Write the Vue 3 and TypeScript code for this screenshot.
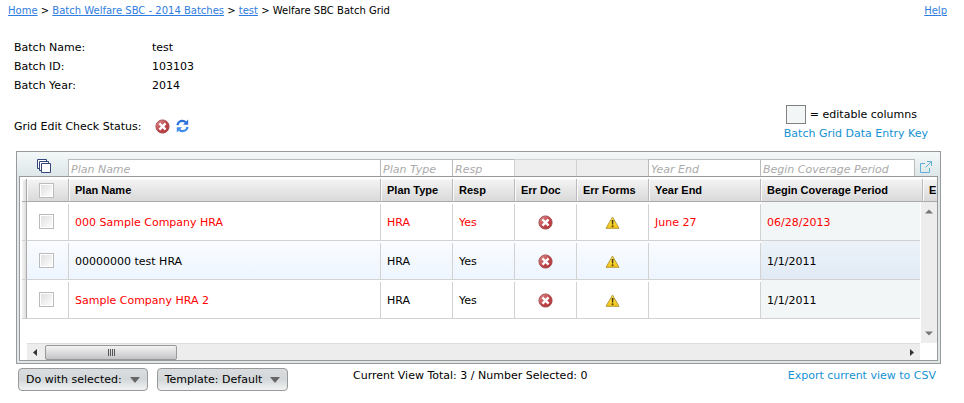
<script setup lang="ts">
interface Row { name: string; resp: string; yearEnd: string; begin: string; error: boolean; nameError: boolean }

const rows: Row[] = [
  { name: '000 Sample Company HRA', resp: 'Yes', yearEnd: 'June 27', begin: '06/28/2013', error: true, nameError: true },
  { name: '00000000 test HRA', resp: 'Yes', yearEnd: '', begin: '1/1/2011', error: false, nameError: false },
  { name: 'Sample Company HRA 2', resp: 'Yes', yearEnd: '', begin: '1/1/2011', error: false, nameError: true },
]
const details: [string, string][] = [
  ['Batch Name:', 'test'],
  ['Batch ID:', '103103'],
  ['Batch Year:', '2014'],
]
</script>

<template>
  <div class="page">
    <svg class="defs" aria-hidden="true">
      <defs>
        <linearGradient id="red" x1="0" y1="0" x2="1" y2="1">
          <stop offset="0" stop-color="#e0999a" /><stop offset=".5" stop-color="#c2494c" /><stop offset="1" stop-color="#ad3033" />
        </linearGradient>
        <linearGradient id="yellow" x1="0" y1="0" x2="0" y2="1">
          <stop offset="0" stop-color="#ffe96a" /><stop offset="1" stop-color="#f6c40c" />
        </linearGradient>
        <symbol id="err" viewBox="0 0 15 15">
          <circle cx="7.5" cy="7.5" r="6.6" fill="url(#red)" stroke="#a04a4c" stroke-width=".9" />
          <path d="M5.3 5.3l4.4 4.4M9.7 5.3l-4.4 4.4" stroke="#fff" stroke-width="2.4" stroke-linecap="square" />
        </symbol>
        <symbol id="warn" viewBox="0 0 15 13">
          <path d="M7.5 1L14 12.3H1z" fill="url(#yellow)" stroke="#b39a3c" stroke-linejoin="round" />
          <path d="M6.7 4h1.8l-.3 4.6H7z" fill="#4b3d0a" />
          <rect x="6.7" y="9.4" width="1.7" height="1.7" fill="#4b3d0a" />
        </symbol>
      </defs>
    </svg>

    <header class="top">
      <nav aria-label="Breadcrumb">
        <a href="#">Home</a> &gt; <a href="#">Batch Welfare SBC - 2014 Batches</a> &gt; <a href="#">test</a> &gt; Welfare SBC Batch Grid
      </nav>
      <a href="#">Help</a>
    </header>

    <section class="info">
      <div>
        <dl class="details">
          <template v-for="[label, value] in details" :key="label">
            <dt>{{ label }}</dt>
            <dd>{{ value }}</dd>
          </template>
        </dl>
        <div class="status">
          <span class="status-label">Grid Edit Check Status:</span>
          <svg width="15" height="15"><use href="#err" /></svg>
          <button class="plain" type="button" aria-label="Refresh">
            <svg width="13" height="14" viewBox="0 0 13 14" fill="none">
              <path d="M1.6 6.2C1.8 3.6 4 1.9 6.4 1.9c1.3 0 2.3.4 3.2 1.2" stroke="#2a6fdc" stroke-width="2.4" />
              <path d="M12.2.6v5.200H7z" fill="#2a6fdc" />
              <path d="M11.4 7.8c-.2 2.6-2.4 4.3-4.800 4.300-1.300 0-2.300-.4-3.200-1.200" stroke="#3f8bec" stroke-width="2.4" />
              <path d="M.8 13.400V8.200H6z" fill="#3f8bec" />
            </svg>
          </button>
        </div>
      </div>
      <div class="legend">
        <div class="key"><i class="swatch"></i><span>= editable columns</span></div>
        <a href="#">Batch Grid Data Entry Key</a>
      </div>
    </section>

    <main class="frame">
      <div class="filters">
        <button class="plain views" type="button" aria-label="Views">
          <svg width="14" height="14" viewBox="0 0 14 14" fill="#fff" stroke="#34477c">
            <path d="M.5.5h9v9h-9z" /><path d="M2.5 2.5h9v9h-9z" /><path d="M4.5 4.5h9v9h-9z" />
          </svg>
        </button>
        <input class="f-name" placeholder="Plan Name" aria-label="Plan Name">
        <input class="f-type" placeholder="Plan Type" aria-label="Plan Type">
        <input class="f-resp" placeholder="Resp" aria-label="Resp">
        <span class="f-off f-doc"></span>
        <span class="f-off f-forms"></span>
        <input class="f-year" placeholder="Year End" aria-label="Year End">
        <input class="f-begin" placeholder="Begin Coverage Period" aria-label="Begin Coverage Period">
        <button class="plain popout" type="button" aria-label="Open in new window">
          <svg width="12" height="12" viewBox="0 0 12 12" fill="none" stroke="#62b0d8">
            <path d="M5 2.5H.5v9h9V7M7 .5h4.5V5M11.3.7L5.5 6.5" />
          </svg>
        </button>
      </div>

      <div class="grid">
        <table>
          <colgroup>
            <col class="c-sel"><col class="c-check"><col><col class="c-type"><col class="c-resp"><col class="c-resp"><col class="c-type"><col class="c-year"><col class="c-begin"><col class="c-end">
          </colgroup>
          <thead>
            <tr>
              <th class="sel"></th>
              <th class="check"><input type="checkbox" aria-label="Select all"></th>
              <th>Plan Name</th><th>Plan Type</th><th>Resp</th><th>Err Doc</th><th>Err Forms</th><th>Year End</th><th>Begin Coverage Period</th><th class="cut">E</th>
            </tr>
          </thead>
          <tbody>
            <tr v-for="row in rows" :key="row.name" :class="{ error: row.error }">
              <td class="sel"></td>
              <td class="check"><input type="checkbox" :aria-label="'Select ' + row.name"></td>
              <td :class="{ red: row.nameError }">{{ row.name }}</td>
              <td>HRA</td>
              <td>{{ row.resp }}</td>
              <td class="icon"><svg width="15" height="15"><use href="#err" /></svg></td>
              <td class="icon"><svg width="15" height="13"><use href="#warn" /></svg></td>
              <td>{{ row.yearEnd }}</td>
              <td class="edit">{{ row.begin }}</td>
              <td class="blank"></td>
            </tr>
          </tbody>
        </table>
        <div class="hscroll">
          <svg width="15" height="15"><path d="M9 4v7L5 7.500z" fill="#333" /></svg>
          <div class="thumb"><i></i><i></i><i></i><i></i></div>
          <svg class="end" width="15" height="15"><path d="M6 4v7L10 7.500z" fill="#333" /></svg>
        </div>
        <div class="vscroll">
          <svg width="15" height="15"><path d="M4 9.500h8L8 5.500z" fill="#777" /></svg>
          <svg width="15" height="15"><path d="M4 5.500h8L8 9.500z" fill="#777" /></svg>
        </div>
      </div>
    </main>

    <footer class="foot">
      <div class="menus">
        <button class="menu" type="button">Do with selected: <i class="caret"></i></button>
        <button class="menu" type="button">Template: Default <i class="caret"></i></button>
      </div>
      <span>Current View Total: 3 / Number Selected: 0</span>
      <a href="#">Export current view to CSV</a>
    </footer>
  </div>
</template>

<style>
body { background: #fff; }
</style>

<style scoped>
* { box-sizing: border-box; }
.page { font: 11px/19px Verdana, "DejaVu Sans", sans-serif; color: #000; padding: 1px 0 12px; }
.defs { position: absolute; width: 0; height: 0; }
svg { display: block; flex: none; }
.plain { border: 0; padding: 0; background: none; }
.top { display: flex; justify-content: space-between; padding: 0 17px 0 8px; font-size: 10px; }
.top a { color: #2f7de0; text-decoration: underline; }
.info { display: flex; justify-content: space-between; align-items: flex-end; padding: 18px 36px 0 14px; }
.details { display: grid; grid-template-columns: 138px auto; margin: 0; }
.details dd { margin: 0; }
.status { display: flex; align-items: center; gap: 6px; height: 48px; padding: 20px 0 6px; }
.status-label { margin-right: 8px; }
.key { display: flex; align-items: center; gap: 4px; padding-left: 2px; }
.swatch { width: 20px; height: 19px; border: 1px solid #808080; background: #f2f6f6; }
.legend a, .foot a { color: #1592d2; text-decoration: none; }

.frame { margin: 8px 23px 0 16px; padding: 7px 2px 2px; border: 1px solid #999; background: linear-gradient(#f4f8f9, #dde6e8 24px, #dfe8e8); }
.filters { display: flex; height: 17px; }
.views { width: 49px; display: flex; justify-content: center; }
.filters input, .f-off { min-width: 0; border: solid #bbb; border-width: 1px 0 0 1px; background: #fff; font: 11px/15px Verdana, "DejaVu Sans", sans-serif; padding: 2px 2px 0; outline: 0; border-radius: 0; }
.filters input::placeholder { color: #aaa; font-style: italic; opacity: 1; }
.filters .f-name { flex: 1; }
.filters .f-off { background: #eee; border-color: #d0d0d0; }
.f-type, .f-forms { width: 72px; }
.f-resp, .f-doc { width: 62px; }
.f-year { width: 112px; }
.filters .f-begin { width: 155px; border-right-width: 1px; }
.popout { width: 23px; display: flex; padding: 2px 0 0 5px; }

.grid { position: relative; border: 1px solid #999; padding: 2px 0 0 2px; background: #fff; overflow: hidden; }
table { width: 100%; table-layout: fixed; border-collapse: separate; border-spacing: 0; }
.c-sel { width: 5px; }
.c-check { width: 42px; }
.c-type { width: 72px; }
.c-resp { width: 62px; }
.c-year { width: 112px; }
.c-begin { width: 162px; }
.c-end { width: 14px; }
th, td { padding: 0 0 0 6px; text-align: left; overflow: hidden; white-space: nowrap; }
th { height: 23px; font: bold 11px/16px "Liberation Sans", Arial, sans-serif; background: linear-gradient(#f4f4f4, #d9d9d9); border-right: 1px solid #bbb; border-bottom: 1px solid #aaa; box-shadow: inset 1px 1px #fafafa; }
th.cut { border-right: 0; }
td { height: 39px; padding-top: 2px; border-bottom: 1px solid #d2d2d2; background: linear-gradient(#d2d2d2, #d2d2d2) right bottom / 1px calc(100% - 2px) no-repeat; }
.sel, td.sel { padding: 0; background: linear-gradient(90deg, #f5f5f5, #ddd); border-right: 1px solid #aaa; }
th.check, td.check { padding: 0 3px 0 0; }
.check input { appearance: none; display: block; width: 15px; height: 15px; margin: 0 auto; border: 1px solid #bbb; background: linear-gradient(135deg, #ddd, #fff); box-shadow: inset 0 0 0 1px #fff; }
td.icon { padding: 2px 1px 0 0; }
.icon svg { margin: 0 auto; }
tbody tr:nth-child(even) { background: linear-gradient(#fafcff, #edf5fe); }
.error, .red { color: #f00; }
td.edit { background: #f2f6f6; }
tr:nth-child(even) .edit { background: linear-gradient(#ecf2f8, #e1eaf5); }
.hscroll { display: flex; align-items: center; height: 17px; margin: 24px 17px 0 5px; background: #ededed; border-top: 1px solid #ddd; }
.hscroll > svg { margin: 0 2px 0 1px; }
.hscroll .end { margin: 0 1px 0 auto; }
.thumb { width: 132px; height: 15px; display: flex; justify-content: center; align-items: center; gap: 1px; border: 1px solid #999; border-radius: 2px; background: linear-gradient(#f3f3f3, #dcdcdc 50%, #c4c4c8); }
.thumb i { width: 1px; height: 7px; background: #555; }
.vscroll { position: absolute; top: 25px; right: 0; bottom: 17px; width: 17px; display: flex; flex-direction: column; justify-content: space-between; padding: 2px 0; background: #ededed; border-left: 1px solid #fff; }

.foot { display: grid; grid-template-columns: 335px 1fr auto; padding: 4px 28px 0 18px; line-height: 15px; }
.menus { display: flex; gap: 9px; }
.menu { display: flex; align-items: center; gap: 8px; height: 23px; padding: 0 7px; border: 1px solid #999; border-radius: 4px; background: linear-gradient(#d9dddf, #d3d7d9 50%, #f1f3f3); font: 11px/19px Verdana, "DejaVu Sans", sans-serif; color: #000; }
.caret { border: 5px solid transparent; border-top: 6px solid #666; border-bottom: 0; }
</style>
